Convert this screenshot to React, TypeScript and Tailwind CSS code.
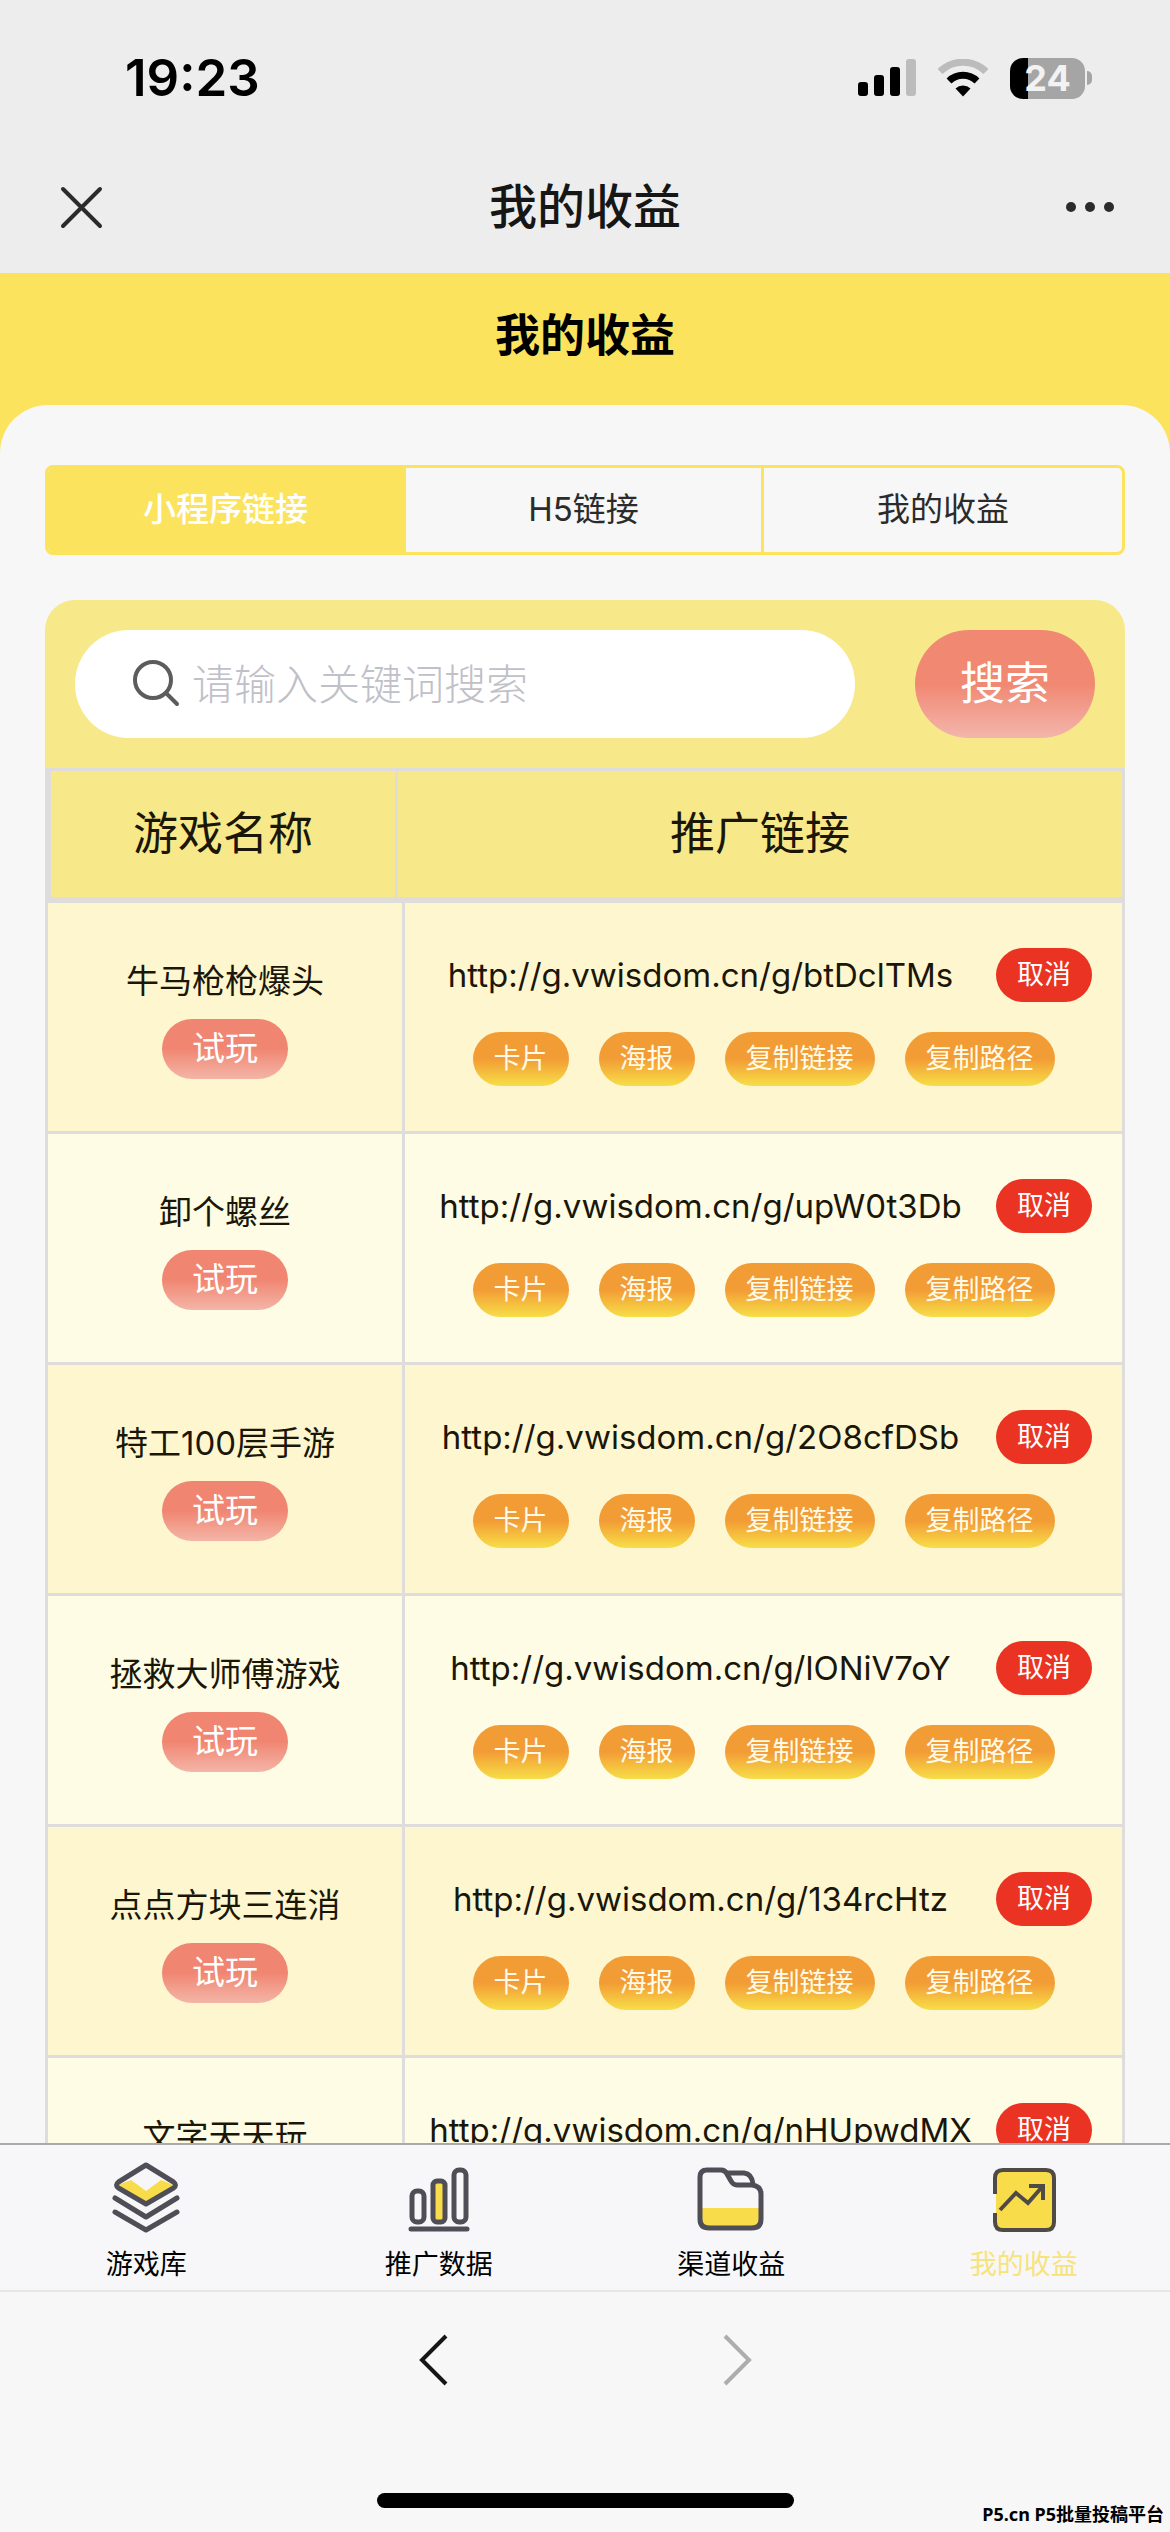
import { useState } from 'react';

interface Game {
  name: string;
  link: string;
}

const games: Game[] = [
  { name: '牛马枪枪爆头', link: 'http://g.vwisdom.cn/g/btDclTMs' },
  { name: '卸个螺丝', link: 'http://g.vwisdom.cn/g/upW0t3Db' },
  { name: '特工100层手游', link: 'http://g.vwisdom.cn/g/2O8cfDSb' },
  { name: '拯救大师傅游戏', link: 'http://g.vwisdom.cn/g/lONiV7oY' },
  { name: '点点方块三连消', link: 'http://g.vwisdom.cn/g/134rcHtz' },
  { name: '文字天天玩', link: 'http://g.vwisdom.cn/g/nHUpwdMX' },
];

const tabs = ['小程序链接', 'H5链接', '我的收益'];
const linkActions = ['卡片', '海报', '复制链接', '复制路径'];

function StatusBar() {
  return (
    <div className="flex h-[156px] items-center justify-between pl-[125px] pr-[78px]">
      <span className="text-[51px] leading-[60px] font-semibold text-black">19:23</span>
      <div className="flex items-center gap-[22px]">
        <svg width="58" height="38" viewBox="0 0 58 38" aria-hidden="true">
          <rect x="0" y="23" width="10" height="14" rx="3" />
          <rect x="16" y="16" width="10" height="21" rx="3" />
          <rect x="32" y="8" width="10" height="29" rx="3" />
          <rect x="48" y="0" width="10" height="37" rx="3" fill="#bcbcbc" />
        </svg>
        <svg width="50" height="38" viewBox="0 0 50 38" fill="none" aria-hidden="true">
          <path d="M2 12.500a33 33 0 0 1 46 0" stroke="#bcbcbc" strokeWidth="7" />
          <path d="M11 22a20 20 0 0 1 28 0" stroke="#000" strokeWidth="7" />
          <path d="M25 37.500L17.500 29.500a11 11 0 0 1 15 0z" fill="#000" />
        </svg>
        <div className="flex items-center gap-0.5">
          <div className="flex h-[41px] w-[75px] items-center justify-center rounded-[13px] bg-linear-to-r from-black from-24% to-[#a5a5a5] to-24% text-[36px] leading-[41px] font-bold text-[#f2f2f2]">
            24
          </div>
          <div className="h-[14px] w-[5px] rounded-r-full bg-[#a5a5a5]" />
        </div>
      </div>
    </div>
  );
}

function NavBar() {
  return (
    <div className="flex h-[102px] items-center justify-between px-[56px]">
      <button aria-label="关闭">
        <svg width="50" height="50" viewBox="0 0 50 50" stroke="#2b2b2b" strokeWidth="4" strokeLinecap="round">
          <path d="M7 7l37 37M44 7L7 44" />
        </svg>
      </button>
      <span className="text-[48px] leading-[60px] font-medium text-[#161616]">我的收益</span>
      <button aria-label="更多">
        <svg width="50" height="50" viewBox="0 0 50 50" fill="#2b2b2b">
          <circle cx="7" cy="25" r="5" />
          <circle cx="26" cy="25" r="5" />
          <circle cx="45" cy="25" r="5" />
        </svg>
      </button>
    </div>
  );
}

function SearchBar() {
  return (
    <form
      className="flex h-[168px] items-center gap-[60px] rounded-t-[30px] bg-[#f7e98a] px-[30px]"
      onSubmit={(e) => e.preventDefault()}
    >
      <label className="flex h-[108px] min-w-0 flex-1 items-center gap-2.5 rounded-full bg-white pl-[57px]">
        <svg className="shrink-0" width="50" height="50" viewBox="0 0 50 50" fill="none" stroke="#5c5c5c" strokeWidth="4" strokeLinecap="round">
          <circle cx="21" cy="21" r="18" />
          <path d="M34 34l11 11" />
        </svg>
        <input
          type="text"
          aria-label="关键词搜索"
          placeholder="请输入关键词搜索"
          className="h-full w-full min-w-0 bg-transparent text-[42px] font-light text-gray-800 outline-none placeholder:text-[#c0c0c8]"
        />
      </label>
      <button className="h-[108px] w-[180px] rounded-full bg-linear-to-b from-[#f08872] from-50% to-[#f3b5ac] text-[45px] text-white">
        搜索
      </button>
    </form>
  );
}

function GameRow({ game }: { game: Game }) {
  return (
    <tr className="odd:bg-[#fef6cf] even:bg-[#fefce4]">
      <td colSpan={2} className="h-[231px] border-r-3 border-b-3 border-[#dfdcdc] p-0">
        <div className="flex flex-col items-center gap-3">
          <span className="text-[33px] leading-[52px]">{game.name}</span>
          <button className="h-[60px] w-[126px] rounded-full bg-linear-to-b from-[#f08672] from-50% to-[#f3b5a8] text-[33px] text-white">
            试玩
          </button>
        </div>
      </td>
      <td className="h-[231px] border-b-3 border-[#dfdcdc] p-0">
        <div className="flex flex-col items-center gap-[30px]">
          <div className="flex w-full items-center gap-5 pr-[30px] pl-5">
            <a href={game.link} className="min-w-0 flex-1 text-center text-[33px] leading-[54px] whitespace-nowrap">
              {game.link}
            </a>
            <button className="h-[54px] w-24 shrink-0 rounded-full bg-[#ea3323] text-[27px] text-white">取消</button>
          </div>
          <div className="flex justify-center gap-[30px]">
            {linkActions.map((action) => (
              <button
                key={action}
                className="h-[54px] rounded-full bg-linear-to-b from-[#f29c35] from-50% to-[#f6de48] px-[21px] text-[27px] text-[#fffbe8]"
              >
                {action}
              </button>
            ))}
          </div>
        </div>
      </td>
    </tr>
  );
}

function GameTable() {
  return (
    <table className="w-full table-fixed border-separate border-spacing-0 border-x-3 border-t-3 border-[#dfdcdc] text-[#1a1608]">
      <colgroup>
        <col className="w-[350px]" />
        <col className="w-[7px]" />
        <col />
      </colgroup>
      <thead className="bg-[#f7e98a]">
        <tr>
          <th className="h-[132px] border-x-3 border-b-6 border-[#dfdcdc] p-0 text-[45px] font-normal">游戏名称</th>
          <th colSpan={2} className="h-[132px] border-b-6 border-[#dfdcdc] p-0 text-[45px] font-normal">
            推广链接
          </th>
        </tr>
      </thead>
      <tbody>
        {games.map((game) => (
          <GameRow key={game.name} game={game} />
        ))}
      </tbody>
    </table>
  );
}

function LayersIcon() {
  return (
    <svg width="72" height="72" viewBox="0 0 72 72" fill="none" stroke="#4f4e56" strokeWidth="5" strokeLinecap="round" strokeLinejoin="round">
      <path d="M8 24l28 17 28-17-13-5-15 11-15-11z" fill="#f9dc4a" stroke="none" />
      <path d="M36 4L8.500 21q-4 3 0 6L36 43l27.500-16q4-3 0-6z" />
      <path d="M5 37l31 19 31-19M5 51l31 18 31-18" />
    </svg>
  );
}

function ChartIcon() {
  return (
    <svg width="72" height="72" viewBox="0 0 72 72" fill="none" stroke="#4f4e56" strokeWidth="5">
      <rect x="9" y="30" width="12" height="31" rx="5" />
      <rect x="30" y="20" width="12" height="41" rx="4" fill="#f9dc4a" />
      <rect x="51" y="9" width="12" height="52" rx="5" />
      <path d="M8 68h56" strokeLinecap="round" />
    </svg>
  );
}

function FolderIcon() {
  return (
    <svg width="72" height="72" viewBox="0 0 72 72" fill="none" stroke="#4f4e56" strokeWidth="5" strokeLinejoin="round">
      <path d="M6 47h60v13q0 6-6 6H12q-6 0-6-6z" fill="#f9dc4a" stroke="none" />
      <path d="M5 16q0-7 7-7h14q4 0 6 4l4 7q2 4 6 4h15q9 1 9 9v25q0 9-9 9H14q-9 0-9-9z" />
      <path d="M31 12h18q8 1 9 11" />
    </svg>
  );
}

function TrendIcon() {
  return (
    <svg width="72" height="72" viewBox="0 0 72 72" fill="none" stroke="#4f4a45" strokeWidth="4">
      <rect x="8" y="9" width="57" height="60" rx="8" fill="#f9dc4a" stroke="none" />
      <path d="M7 33V17q0-8 8-8h43q8 0 8 8v44q0 8-8 8H15q-8 0-8-8V52" />
      <path d="M12 49l16-17 12 10 14-16M41 25h14v14" />
    </svg>
  );
}

const navItems = [
  { label: '游戏库', icon: <LayersIcon />, active: false },
  { label: '推广数据', icon: <ChartIcon />, active: false },
  { label: '渠道收益', icon: <FolderIcon />, active: false },
  { label: '我的收益', icon: <TrendIcon />, active: true },
];

function BottomNav() {
  return (
    <nav className="grid h-[149px] shrink-0 grid-cols-4 border-t-2 border-b-2 border-t-[#a9a9ac] border-b-[#e6e6e6] bg-[#f7f7f9]">
      {navItems.map((item) => (
        <a
          key={item.label}
          href="#"
          className={`flex flex-col items-center pt-4 text-[27px] leading-[36px] ${
            item.active ? 'text-[#f6e37c]' : 'text-black'
          }`}
        >
          <span className="mb-3.5">{item.icon}</span>
          {item.label}
        </a>
      ))}
    </nav>
  );
}

function BrowserBar() {
  return (
    <footer className="relative flex h-[240px] shrink-0 flex-col items-center justify-between bg-[#f7f7f7] pt-[38px] pb-6">
      <div className="flex gap-[240px]">
        <button aria-label="后退">
          <svg width="60" height="60" viewBox="0 0 60 60" fill="none" stroke="#161616" strokeWidth="4">
            <path d="M41 6L17 30l24 24" />
          </svg>
        </button>
        <button aria-label="前进" disabled>
          <svg width="60" height="60" viewBox="0 0 60 60" fill="none" stroke="#adadad" strokeWidth="4">
            <path d="M20 6l24 24-24 24" />
          </svg>
        </button>
      </div>
      <div className="h-[15px] w-[417px] rounded-full bg-black" />
      <span className="absolute right-1.5 bottom-1.5 font-['Noto_Sans','Noto_Sans_CJK_SC',sans-serif] text-[18px] leading-[24px] font-bold text-black">
        P5.cn P5批量投稿平台
      </span>
    </footer>
  );
}

export default function App() {
  const [activeTab, setActiveTab] = useState(0);

  return (
    <div className="flex h-screen flex-col overflow-hidden bg-[#f7f7f7] font-['Inter','Noto_Sans_CJK_SC',sans-serif]">
      <header className="h-[273px] shrink-0 bg-[#ededed]">
        <StatusBar />
        <NavBar />
      </header>

      <main className="min-h-0 flex-1 overflow-y-auto bg-[#fce35d] [scrollbar-width:none]">
        <h1 className="h-[132px] text-center text-[45px] leading-[126px] font-bold text-black">我的收益</h1>

        <div className="rounded-t-[48px] bg-[#f7f7f7] px-[45px] pt-[60px]">
          {/* Link type switcher */}
          <div className="mb-[45px] grid h-[90px] grid-cols-3 divide-x-3 divide-[#fce35d] overflow-hidden rounded-lg border-3 border-[#fce35d]">
            {tabs.map((tab, i) => (
              <button
                key={tab}
                onClick={() => setActiveTab(i)}
                className={`text-[33px] ${i === activeTab ? 'bg-[#fce35d] font-medium text-white' : 'text-[#2b2b2b]'}`}
              >
                {tab}
              </button>
            ))}
          </div>

          <SearchBar />
          <GameTable />
        </div>
      </main>

      <BottomNav />
      <BrowserBar />
    </div>
  );
}
